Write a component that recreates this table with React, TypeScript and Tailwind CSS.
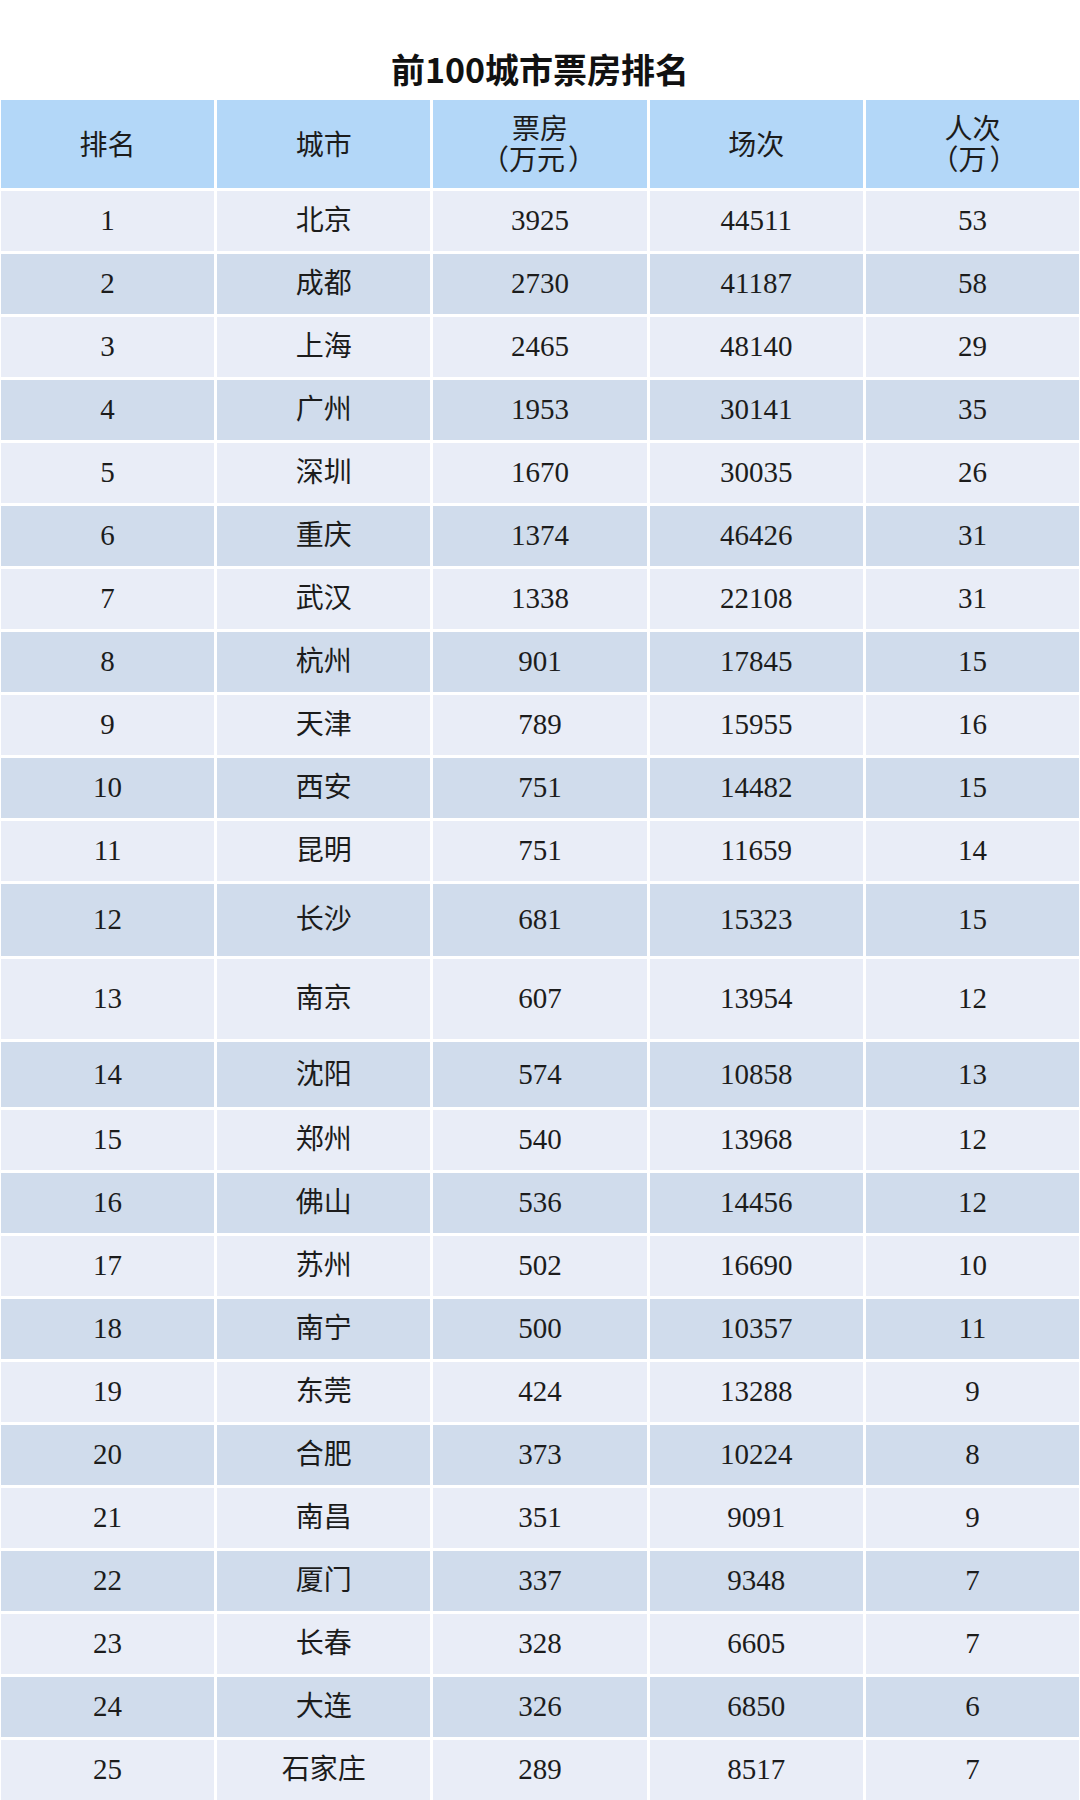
import React from "react";

type Row = [string, string, string, string, string];

const rows: Row[] = [
  ["1", "北京", "3925", "44511", "53"],
  ["2", "成都", "2730", "41187", "58"],
  ["3", "上海", "2465", "48140", "29"],
  ["4", "广州", "1953", "30141", "35"],
  ["5", "深圳", "1670", "30035", "26"],
  ["6", "重庆", "1374", "46426", "31"],
  ["7", "武汉", "1338", "22108", "31"],
  ["8", "杭州", "901", "17845", "15"],
  ["9", "天津", "789", "15955", "16"],
  ["10", "西安", "751", "14482", "15"],
  ["11", "昆明", "751", "11659", "14"],
  ["12", "长沙", "681", "15323", "15"],
  ["13", "南京", "607", "13954", "12"],
  ["14", "沈阳", "574", "10858", "13"],
  ["15", "郑州", "540", "13968", "12"],
  ["16", "佛山", "536", "14456", "12"],
  ["17", "苏州", "502", "16690", "10"],
  ["18", "南宁", "500", "10357", "11"],
  ["19", "东莞", "424", "13288", "9"],
  ["20", "合肥", "373", "10224", "8"],
  ["21", "南昌", "351", "9091", "9"],
  ["22", "厦门", "337", "9348", "7"],
  ["23", "长春", "328", "6605", "7"],
  ["24", "大连", "326", "6850", "6"],
  ["25", "石家庄", "289", "8517", "7"],
];

const heightClass = (i: number) => {
  if (i === 11) return "h-[72px]";
  if (i === 12) return "h-[80px]";
  if (i === 13) return "h-[65px]";
  return "h-[60px]";
};

const serif = {
  fontFamily: '"Liberation Serif", "Noto Sans CJK SC", serif',
};

function Unit({ text, shift }: { text: string; shift?: boolean }) {
  return (
    <span className={`flex items-center ${shift ? "mr-[6px]" : ""}`}>
      <span className="inline-block w-[28px] text-right pr-[6px]">（</span>
      <span>{text}</span>
      <span className="inline-block w-[28px] text-left pl-[3px]">）</span>
    </span>
  );
}

const headers: { top: string; unit?: string }[] = [
  { top: "排名" },
  { top: "城市" },
  { top: "票房", unit: "万元" },
  { top: "场次" },
  { top: "人次", unit: "万" },
];

export default function App() {
  return (
    <div className="w-[1080px] h-[1800px] bg-white overflow-hidden" style={serif}>
      <div className="h-[100px] flex items-center justify-center pt-[38px]">
        <h1
          className="text-[34px] font-bold text-[#111] leading-[40px]"
          style={{ fontFamily: '"Noto Sans CJK SC", "Noto Sans", sans-serif' }}
        >
          前100城市票房排名
        </h1>
      </div>
      <div className="flex flex-col gap-[3px] px-[1px] text-[#1c1c1c]">
        <div className="grid grid-cols-5 gap-x-[3px] h-[88px]">
          {headers.map((h) => (
            <div
              key={h.top}
              className="bg-[#b3d7f8] flex flex-col items-center justify-center pt-[2px] text-[28px] leading-[31px]"
            >
              <span>{h.top}</span>
              {h.unit && <Unit text={h.unit} shift={h.unit === "万元"} />}
            </div>
          ))}
        </div>
        {rows.map((r, i) => (
          <div key={r[0]} className={`grid grid-cols-5 gap-x-[3px] ${heightClass(i)}`}>
            {r.map((c, k) => (
              <div
                key={k}
                className={`${i % 2 === 0 ? "bg-[#e9edf7]" : "bg-[#d0dcec]"} flex items-center justify-center ${k === 1 ? "text-[28px]" : "text-[29px]"}`}
              >
                {c}
              </div>
            ))}
          </div>
        ))}
      </div>
    </div>
  );
}
